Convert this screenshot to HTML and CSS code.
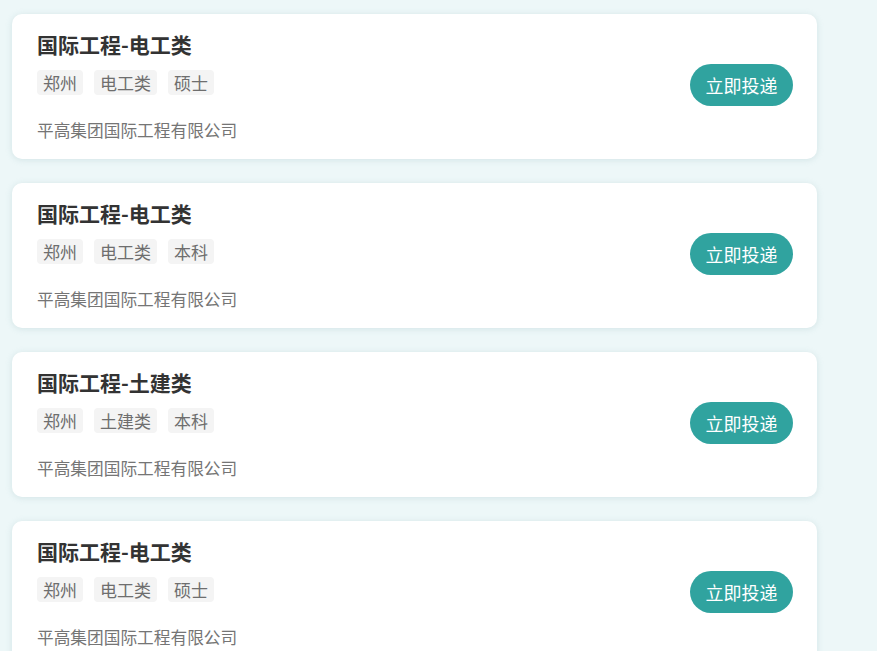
FILE: index.html
```html
<!DOCTYPE html>
<html lang="zh-CN">
<head>
<meta charset="utf-8">
<link rel="stylesheet" href="styles.css">
</head>
<body>
<div class="list">
  <div class="card">
    <div class="info">
      <div class="title">国际工程-电工类</div>
      <div class="tags"><span class="tag">郑州</span><span class="tag">电工类</span><span class="tag">硕士</span></div>
      <div class="company">平高集团国际工程有限公司</div>
    </div>
    <button class="apply">立即投递</button>
  </div>
  <div class="card">
    <div class="info">
      <div class="title">国际工程-电工类</div>
      <div class="tags"><span class="tag">郑州</span><span class="tag">电工类</span><span class="tag">本科</span></div>
      <div class="company">平高集团国际工程有限公司</div>
    </div>
    <button class="apply">立即投递</button>
  </div>
  <div class="card">
    <div class="info">
      <div class="title">国际工程-土建类</div>
      <div class="tags"><span class="tag">郑州</span><span class="tag">土建类</span><span class="tag">本科</span></div>
      <div class="company">平高集团国际工程有限公司</div>
    </div>
    <button class="apply">立即投递</button>
  </div>
  <div class="card">
    <div class="info">
      <div class="title">国际工程-电工类</div>
      <div class="tags"><span class="tag">郑州</span><span class="tag">电工类</span><span class="tag">硕士</span></div>
      <div class="company">平高集团国际工程有限公司</div>
    </div>
    <button class="apply">立即投递</button>
  </div>
</div>
</body>
</html>
```

FILE: styles.css
```css
html, body {
  margin: 0;
  padding: 0;
  background: #edf7f8;
  font-family: "Noto Sans CJK SC", "Noto Sans", sans-serif;
}
.list {
  width: 805px;
  padding: 14px 0 0 12px;
  display: flex;
  flex-direction: column;
  gap: 24px;
}
.card {
  background: #ffffff;
  border-radius: 10px;
  box-shadow: 0 1px 6px rgba(150, 185, 190, 0.3);
  display: flex;
  align-items: center;
  justify-content: space-between;
  padding: 16px 24px 17px 25px;
}
.info {
  display: flex;
  flex-direction: column;
}
.title {
  font-size: 21px;
  font-weight: 700;
  line-height: 28px;
  color: #333333;
}
.tags {
  display: flex;
  gap: 11px;
  margin-top: 12px;
}
.tag {
  background: #f4f4f4;
  color: #6e6e6e;
  font-size: 17px;
  line-height: 25px;
  height: 25px;
  padding: 0 6px;
  border-radius: 4px;
}
.company {
  margin-top: 23px;
  font-size: 16.7px;
  line-height: 24px;
  color: #757575;
}
.apply {
  border: none;
  background: #30a39f;
  color: #ffffff;
  font-family: inherit;
  font-size: 18px;
  height: 42px;
  width: 103px;
  border-radius: 21px;
  padding: 0;
  margin-top: -2px;
}
```
